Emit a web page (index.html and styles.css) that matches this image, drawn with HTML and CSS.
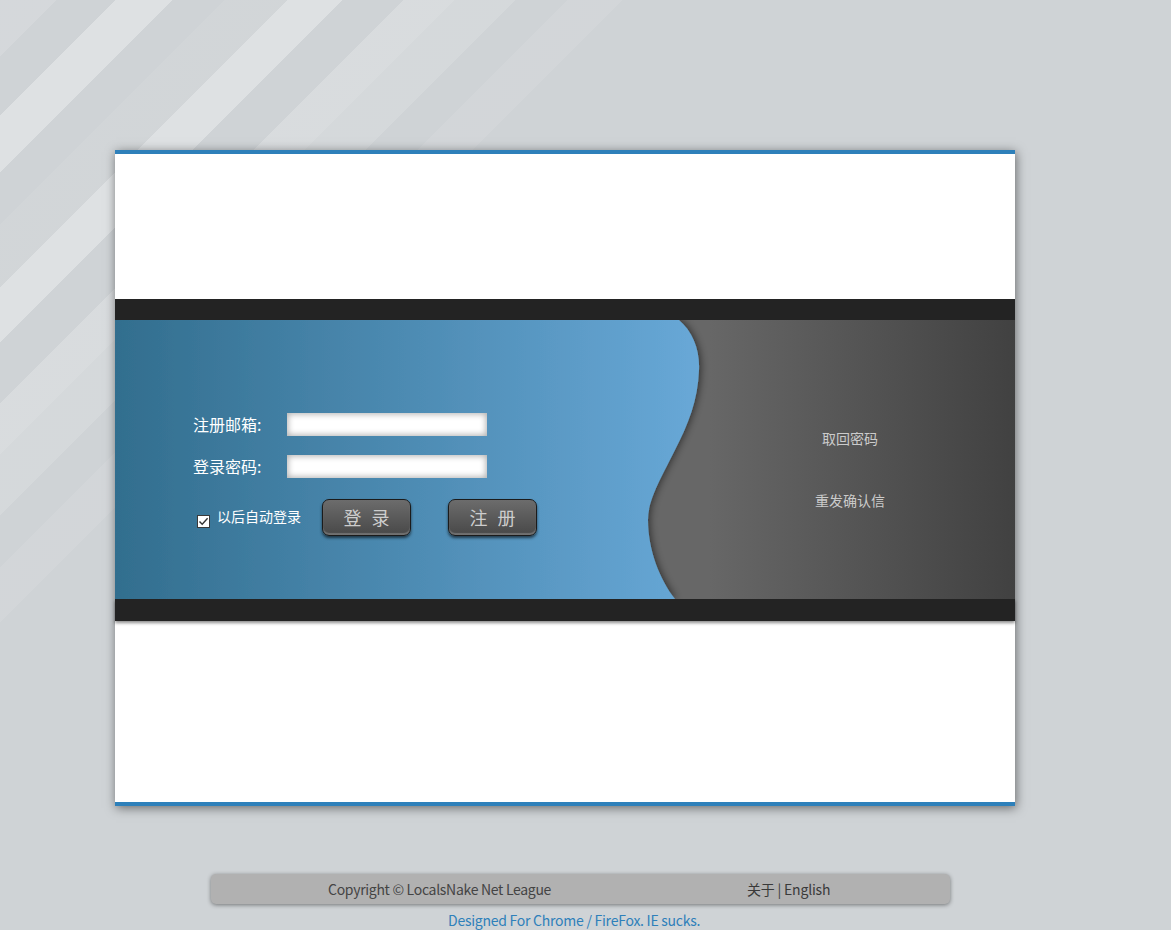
FILE: index.html
```html
<!DOCTYPE html>
<html lang="zh-CN">
<head>
<meta charset="utf-8">
<title>登录</title>
<link rel="stylesheet" href="styles.css">
</head>
<body>
<div class="page">
  <div class="card">
    <div class="card-top"></div>
    <div class="band"></div>
    <div class="panel">
      <svg class="panel-bg" width="900" height="279" viewBox="0 0 900 279" aria-hidden="true">
        <defs>
          <linearGradient id="gray" x1="0" y1="0" x2="900" y2="0" gradientUnits="userSpaceOnUse">
            <stop offset="0.66" stop-color="#676767"/>
            <stop offset="1" stop-color="#414141"/>
          </linearGradient>
          <linearGradient id="blue" x1="0" y1="0" x2="584" y2="0" gradientUnits="userSpaceOnUse">
            <stop offset="0" stop-color="#326e8e"/>
            <stop offset="1" stop-color="#68a8d7"/>
          </linearGradient>
          <filter id="shade" x="-10%" y="-10%" width="130%" height="130%">
            <feDropShadow dx="1" dy="0" stdDeviation="4" flood-color="#000" flood-opacity="0.6"/>
          </filter>
        </defs>
        <rect x="0" y="0" width="900" height="279" fill="url(#gray)"/>
        <path filter="url(#shade)" fill="url(#blue)" d="M0,0 H564 C578,12 585,30 584,50 C583,80 573,105 560,130 C545,160 533,180 533,200 C533,230 545,260 560,279 H0 Z"/>
      </svg>
      <div class="panel-content">
        <form class="login-form">
          <div class="field">
            <label class="field-label">注册邮箱:</label>
            <input class="field-input" type="text">
          </div>
          <div class="field">
            <label class="field-label">登录密码:</label>
            <input class="field-input" type="password">
          </div>
          <div class="actions">
            <div class="remember">
              <span class="check-box">
                <svg width="11" height="11" viewBox="0 0 11 11"><path d="M1.5 5.5 L4.2 8.3 L9.6 2.2" fill="none" stroke="#333" stroke-width="1.4"/></svg>
              </span>
              <span class="remember-text">以后自动登录</span>
            </div>
            <button type="button" class="btn btn-login">登 录</button>
            <button type="button" class="btn btn-register">注 册</button>
          </div>
        </form>
        <div class="links">
          <span class="link">取回密码</span>
          <span class="link">重发确认信</span>
        </div>
      </div>
    </div>
    <div class="band band-bottom"></div>
    <div class="card-bottom"></div>
  </div>
  <footer class="footer">
    <div class="footbar">
      <span class="copy">Copyright © LocalsNake Net League</span>
      <span class="foot-links">关于 | English</span>
    </div>
    <div class="designed">Designed For Chrome / FireFox. IE sucks.</div>
  </footer>
</div>
</body>
</html>
```

FILE: styles.css
```css
html {
  min-height: 100%;
  background-color: #cfd3d6;
  background-image: linear-gradient(135deg,
    rgba(255,255,255,0.12) 0px, rgba(255,255,255,0.12) 39.6px,
    rgba(255,255,255,0) 39.6px, rgba(255,255,255,0) 82px,
    rgba(255,255,255,0.32) 82px, rgba(255,255,255,0.32) 122.3px,
    rgba(255,255,255,0) 122.3px, rgba(255,255,255,0) 158.4px,
    rgba(255,255,255,0.06) 158.4px, rgba(255,255,255,0.06) 203px,
    rgba(255,255,255,0.32) 203px, rgba(255,255,255,0.32) 242.5px,
    rgba(255,255,255,0) 242.5px, rgba(255,255,255,0) 285px,
    rgba(255,255,255,0.2) 285px, rgba(255,255,255,0.2) 321.7px,
    rgba(255,255,255,0.13) 321.7px, rgba(255,255,255,0.13) 364.2px,
    rgba(255,255,255,0) 364.2px, rgba(255,255,255,0) 401px,
    rgba(255,255,255,0.08) 401px, rgba(255,255,255,0.08) 440.5px,
    rgba(255,255,255,0) 440.5px);
  background-repeat: no-repeat;
}

body {
  margin: 0;
  font-family: "Noto Sans CJK SC", "Noto Sans", sans-serif;
}

.page {
  width: 1171px;
  height: 930px;
  overflow: hidden;
}

.card {
  width: 900px;
  margin: 150px 0 0 115px;
  background: #fff;
  border-top: 4px solid #2e80ba;
  border-bottom: 4px solid #2e80ba;
  box-shadow: 1px 2px 10px rgba(0, 0, 0, 0.5);
}

.card-top {
  height: 145px;
}

.band {
  height: 21px;
  background: #232323;
}

.band-bottom {
  height: 22px;
  box-shadow: 0 2px 3px rgba(0, 0, 0, 0.45);
}

.card-bottom {
  height: 181px;
}

.panel {
  display: grid;
  height: 279px;
}

.panel > * {
  grid-area: 1 / 1;
}

.panel-bg {
  display: block;
}

.panel-content {
  display: flex;
}

.login-form {
  width: 570px;
  margin: 0;
  padding: 93px 0 0 78px;
  box-sizing: border-box;
}

.field {
  display: flex;
  align-items: center;
  height: 23px;
}

.field + .field {
  margin-top: 19px;
}

.field-label {
  width: 94px;
  color: #fff;
  font-size: 16px;
  line-height: 23px;
}

.field-input {
  width: 200px;
  height: 23px;
  padding: 0 4px;
  box-sizing: border-box;
  border: 0;
  background: #fff;
  box-shadow: inset 0 0 6px 1px rgba(0, 0, 0, 0.32);
  outline: none;
}

.actions {
  display: flex;
  align-items: center;
  height: 37px;
  margin-top: 21px;
}

.remember {
  display: flex;
  align-items: center;
  margin-left: 4px;
}

.check-box {
  display: flex;
  align-items: center;
  justify-content: center;
  width: 13px;
  height: 13px;
  box-sizing: border-box;
  margin-top: 7px;
  border: 1px solid #3a3a3a;
  background: #fff;
}

.remember-text {
  margin-left: 7px;
  margin-top: -3px;
  color: #fff;
  font-size: 14px;
  line-height: 20px;
}

.btn {
  width: 89px;
  height: 37px;
  padding: 0 0 0 3px;
  box-sizing: border-box;
  border: 1px solid #1b1b1b;
  border-radius: 7px;
  background: linear-gradient(#6c6c6c, #484848);
  box-shadow: 0 2px 3px rgba(0, 0, 0, 0.6), inset 0 -2px 1px rgba(255, 255, 255, 0.22);
  color: #cdcdcd;
  font-family: "Noto Sans CJK SC", sans-serif;
  font-size: 18px;
  letter-spacing: 3px;
  line-height: 33px;
  cursor: pointer;
}

.btn-login {
  margin-left: 21px;
}

.btn-register {
  margin-left: 37px;
}

.links {
  flex: 1;
  display: flex;
  flex-direction: column;
  align-items: center;
  padding-top: 108px;
}

.link {
  color: #cbcbcb;
  font-size: 14px;
  line-height: 20px;
}

.link + .link {
  margin-top: 42px;
}

.footer {
  width: 739px;
  margin: 68px 0 0 211px;
}

.footbar {
  display: flex;
  align-items: center;
  height: 30px;
  border-radius: 5px;
  background: #b1b1b1;
  box-shadow: 0 1px 4px rgba(0, 0, 0, 0.45);
  color: #444;
  font-size: 14px;
  line-height: 20px;
}

.copy {
  width: 419px;
  margin-left: 117px;
  letter-spacing: -0.3px;
}

.foot-links {
  color: #3a3a3a;
  letter-spacing: -0.2px;
}

.designed {
  margin: 6px 0 0 237px;
  color: #2e80ba;
  font-size: 14px;
  line-height: 20px;
  letter-spacing: -0.25px;
}
```
